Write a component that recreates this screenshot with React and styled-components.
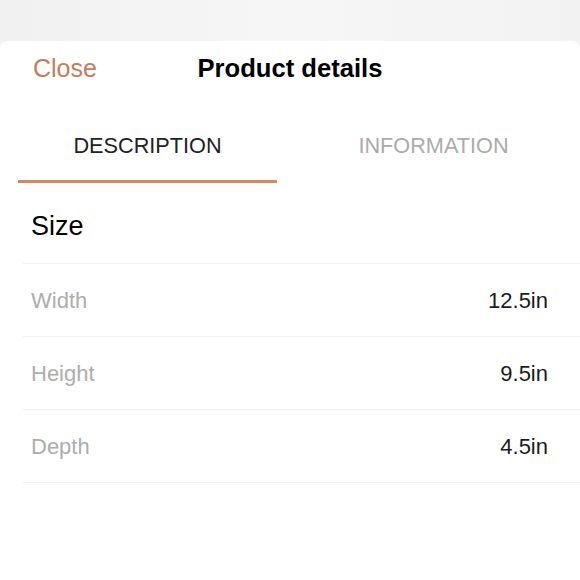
import styled, { createGlobalStyle } from "styled-components"

const GlobalStyle = createGlobalStyle`
  html, body {
    margin: 0;
    padding: 0;
    background: #f3f3f3;
    font-family: "Liberation Sans", Arial, sans-serif;
  }
`;

const Page = styled.div`
  width: 580px;
  height: 580px;
  overflow: hidden;
  display: flex;
  flex-direction: column;
  background: #f3f3f3;
`;

const Backdrop = styled.div`
  height: 41px;
  flex-shrink: 0;
  background: linear-gradient(90deg, #f1f1f1, #f6f6f6 50%, #f2f2f2);
`;

const Sheet = styled.div`
  flex: 1;
  background: #fff;
  border-radius: 8px 8px 0 0;
  display: flex;
  flex-direction: column;
`;

const Header = styled.div`
  height: 54px;
  display: grid;
  grid-template-columns: 1fr auto 1fr;
  align-items: center;
  padding: 0 33px;
`;

const CloseButton = styled.button`
  justify-self: start;
  border: none;
  background: none;
  padding: 0;
  font-family: inherit;
  font-size: 25px;
  color: #c27d5b;
  cursor: pointer;
`;

const Title = styled.h1`
  margin: 0;
  font-size: 25.6px;
  font-weight: 700;
  color: #000;
`;

const Tabs = styled.div`
  display: grid;
  grid-template-columns: 259px 1fr;
  column-gap: 10px;
  padding-left: 18px;
  height: 88px;
`;

const Tab = styled.div`
  display: flex;
  align-items: center;
  justify-content: center;
  padding-top: 17px;
  font-size: 21.7px;
  color: ${props => (props.active ? "#222" : "#ababab")};
  border-bottom: 3px solid ${props => (props.active ? "#d5895f" : "transparent")};
`;

const Section = styled.div`
  padding-left: 23px;
`;

const SectionTitle = styled.h2`
  margin: 0;
  height: 80px;
  display: flex;
  align-items: center;
  padding: 6px 0 0 8px;
  box-sizing: border-box;
  font-size: 27px;
  font-weight: 400;
  color: #000;
`;

const Row = styled.div`
  height: 70px;
  display: flex;
  align-items: center;
  justify-content: space-between;
  padding: 2px 32px 0 8px;
  border-top: 1px solid #efefef;
  &:last-child {
    border-bottom: 1px solid #efefef;
  }
`;

const Label = styled.span`
  font-size: 22px;
  color: #adadad;
`;

const Value = styled.span`
  font-size: 22px;
  color: #1c1c1c;
`;

const sizes = [
  { label: "Width", value: "12.5in" },
  { label: "Height", value: "9.5in" },
  { label: "Depth", value: "4.5in" },
];

const App = () => {
  return (
    <Page>
      <GlobalStyle />
      <Backdrop />
      <Sheet>
        <Header>
          <CloseButton>Close</CloseButton>
          <Title>Product details</Title>
          <span />
        </Header>
        <Tabs>
          <Tab active>DESCRIPTION</Tab>
          <Tab>INFORMATION</Tab>
        </Tabs>
        <Section>
          <SectionTitle>Size</SectionTitle>
          {sizes.map(s => (
            <Row key={s.label}>
              <Label>{s.label}</Label>
              <Value>{s.value}</Value>
            </Row>
          ))}
        </Section>
      </Sheet>
    </Page>
  )
}

export default App
